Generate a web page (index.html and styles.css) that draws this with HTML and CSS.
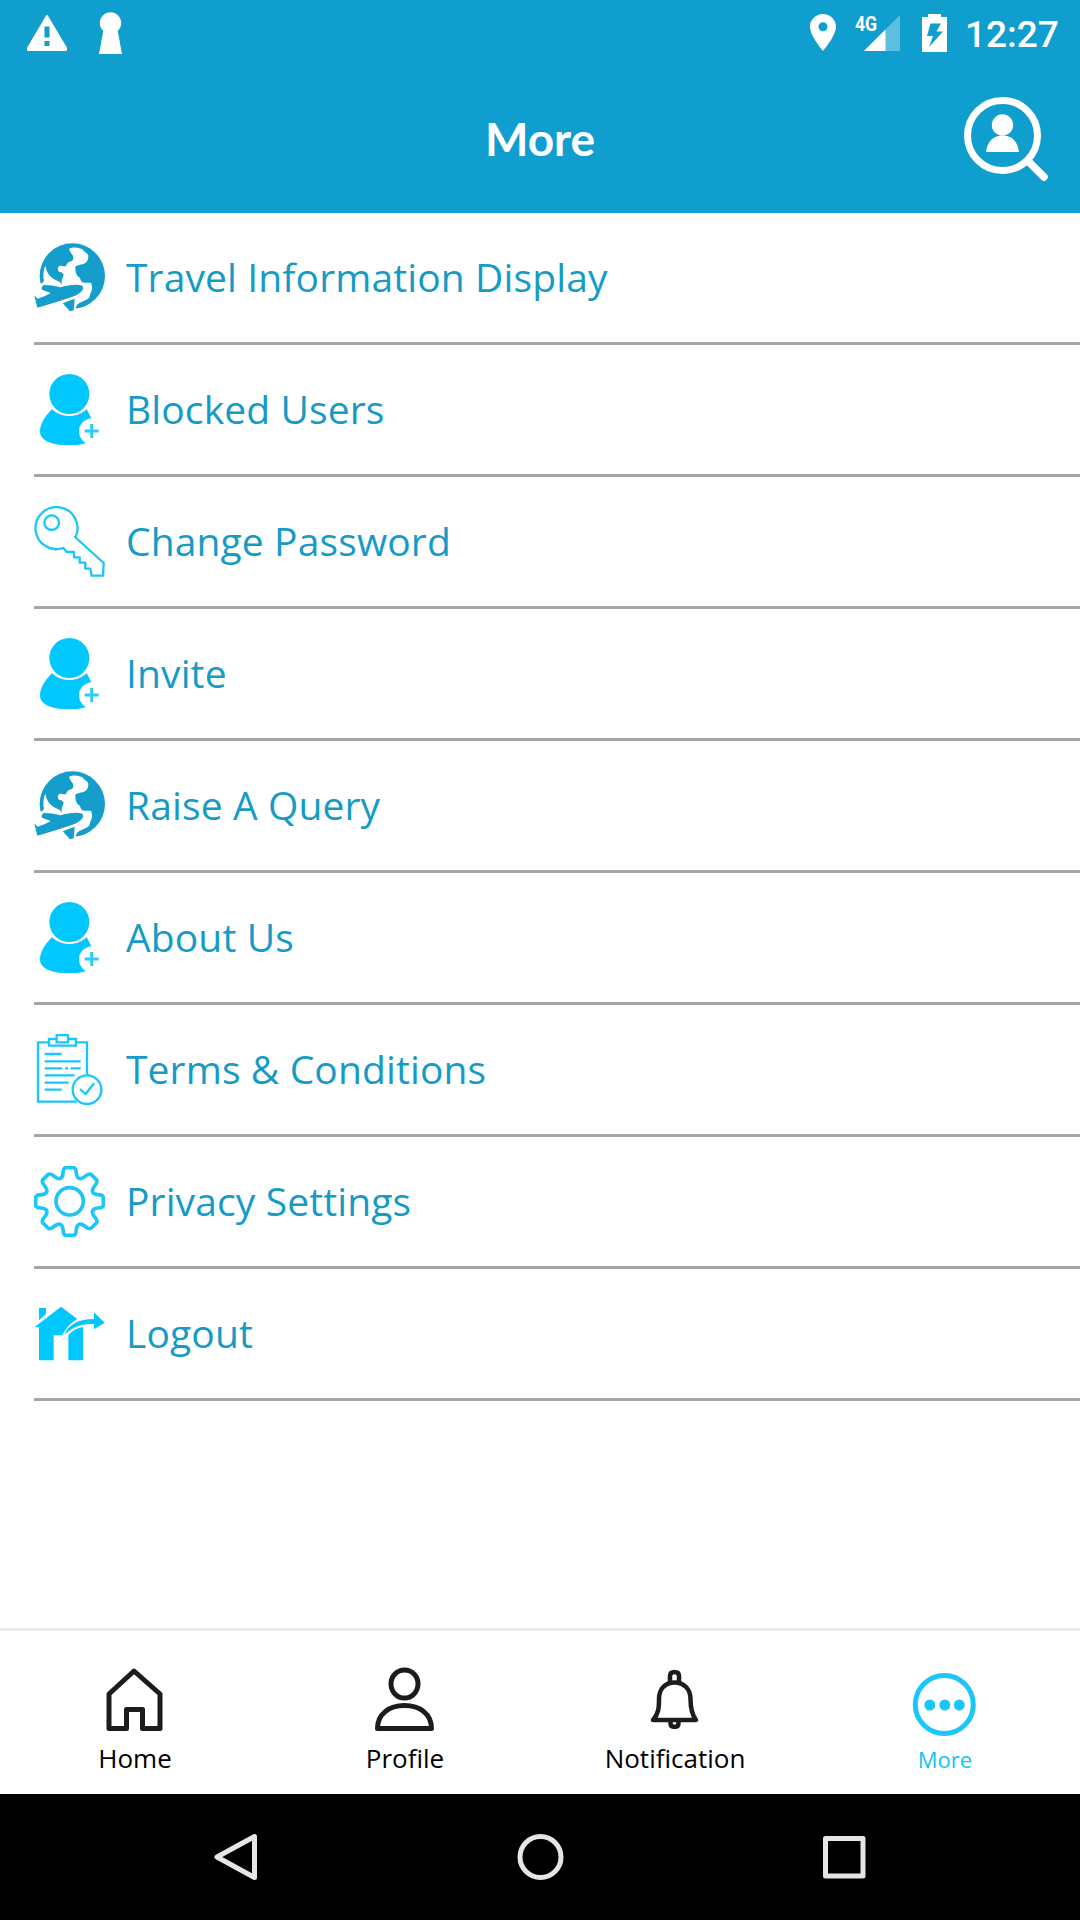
FILE: index.html
```html
<!DOCTYPE html>
<html lang="en">
<head>
	<meta charset="UTF-8">
	<meta name="viewport" content="width=device-width, initial-scale=1.0">
	<title>More</title>
	<link rel="stylesheet" href="styles.css">
</head>
<body>
	<!-- shared icons -->
	<svg class="sprite">
		<symbol id="globe" viewBox="42 66 213 213">
			<circle cx="157" cy="168" r="98" fill="#159dcb"/>
			<path d="M147 86C160 80 180 82 190 90C192 98 204 98 205 108C204 116 204 124 196 129C188 134 178 134 168 138C163 144 168 150 167 157C170 166 174 170 180 174C182 184 188 190 196 188H213C217 196 217 208 214 215C208 222 212 230 204 236C196 242 186 244 178 249C170 254 165 262 168 275L40 275V190L126 192C122 184 128 176 130 168C134 160 124 156 117 155C112 150 112 142 118 138C126 136 132 142 138 138C140 130 146 126 152 124C160 122 162 114 158 106C154 98 148 94 147 86Z" fill="#fff"/>
			<path d="M76 137C80 156 88 172 112 182C122 186 124 190 122 194H62L72 182C68 166 70 150 76 137Z" fill="#fff"/>
			<path d="M43 226L53 236Q74 230 92 219L66 209Q62 200 72 195Q96 195 122 202C142 196 166 192 184 196C196 204 188 216 166 227L110 246L52 263L48 248Z" fill="#159dcb"/>
			<path d="M128 250L164 236L161 271L150 274Z" fill="#159dcb"/>
			<path d="M172 265C184 263 198 258 210 250L206 242C196 250 184 256 172 257Z" fill="#159dcb"/>
		</symbol>
		<symbol id="user" viewBox="42 462 213 213">
			<circle cx="148" cy="522" r="60"/>
			<path d="M96 567C120 594 174 596 200 567L214 594C190 600 177 614 177 633C177 650 186 662 198 670C180 675 166 676 146 676C110 676 60 668 60 634C60 608 80 584 96 567Z"/>
			<path d="M215 612V654M194 633H236" fill="none" stroke="#2ccbf8" stroke-width="9"/>
		</symbol>
	</svg>

	<header>
		<div class="status">
			<svg class="warning" viewBox="0 0 40 36"><path d="M20 1L39 33V35H1V33Z" fill="#fff" stroke="#fff" stroke-width="2" stroke-linejoin="round"/><path d="M17.500 11.500h5v11h-5zM17.500 26h5v5h-5z" fill="#0f9ecd"/></svg>
			<svg class="keyhole" viewBox="0 0 23 42"><circle cx="11.500" cy="11" r="10.700" fill="#fff"/><path d="M5 15H18L23 42H0Z" fill="#fff"/></svg>
			<svg class="location" viewBox="0 0 26 37"><path fill-rule="evenodd" d="M13 0C5.800 0 0 5.700 0 12.800C0 22 13 37 13 37S26 22 26 12.800C26 5.700 20.200 0 13 0ZM13 8.300a4.500 4.500 0 1 1 0 9a4.500 4.500 0 1 1 0-9Z" fill="#fff"/></svg>
			<div class="signal">
				<svg viewBox="0 0 36 36"><path d="M36 0V36H0Z" fill="#fff" opacity=".33"/><path d="M21.500 14.500V36H0Z" fill="#fff"/></svg>
				<span>4G</span>
			</div>
			<svg class="battery" viewBox="0 0 25 38"><path d="M6 0H19V3H25V38H0V3H6Z" fill="#fff"/><path d="M8.500 9.500H19L14.500 17.500H21L7 33L11 22H5Z" fill="#0f9ecd"/></svg>
			<span class="clock">12:27</span>
		</div>
		<div class="title-bar">
			<h1>More</h1>
			<svg class="search" viewBox="0 0 84 84"><circle cx="38.500" cy="38.500" r="35" fill="none" stroke="#fff" stroke-width="7"/><path d="M64 64L80 80" stroke="#fff" stroke-width="7.500" stroke-linecap="round"/><circle cx="38.500" cy="28" r="10.700" fill="#fff"/><path d="M22 55C23 45 29 38.500 38.500 38.500S54 45 55 55Z" fill="#fff"/></svg>
		</div>
	</header>

	<ul class="menu">
		<li><svg><use href="#globe"/></svg><span>Travel Information Display</span></li>
		<li><svg><use href="#user"/></svg><span>Blocked Users</span></li>
		<li>
			<svg class="line" viewBox="42 78 213 213"><circle cx="95" cy="128" r="22"/><path d="M165 171L168 168A63 63 0 1 0 130 204L140 216H162V232H179V248H196V266H211L215 287H249L251 249Z" stroke-linejoin="round"/></svg>
			<span>Change Password</span>
		</li>
		<li><svg><use href="#user"/></svg><span>Invite</span></li>
		<li><svg><use href="#globe"/></svg><span>Raise A Query</span></li>
		<li><svg><use href="#user"/></svg><span>About Us</span></li>
		<li>
			<svg class="line" viewBox="42 72 213 213"><path d="M86 97H54V275H170M170 97H201V195M87 87H110V75H144V87H168V107H87ZM110 87V97H144V87M74 132H125M74 154H182M74 175H127M135 175H144M152 175H182M74 196H164M74 218H146M74 239H125M180 237L197 252L222 220"/><circle cx="201" cy="239" r="43"/></svg>
			<span>Terms &amp; Conditions</span>
		</li>
		<li>
			<svg class="line gear" viewBox="42 468 213 213"><circle cx="149" cy="574" r="41"/><path d="M129 489Q130 473 138 473H160Q168 473 169 489Q170 502 177 505Q184 508 194 500Q208 488 214 494L229 509Q235 515 223 529Q215 539 218 546Q221 553 234 554Q250 555 250 563V585Q250 593 234 594Q221 595 218 602Q215 609 223 619Q235 633 229 639L214 654Q208 660 194 648Q184 640 177 643Q170 646 169 659Q168 676 160 676H138Q130 676 129 659Q128 646 121 643Q114 640 104 648Q90 660 84 654L69 639Q63 633 75 619Q83 609 80 602Q77 595 64 594Q47 593 47 585V563Q47 555 64 554Q77 553 80 546Q83 539 75 529Q63 515 69 509L84 494Q90 488 104 500Q114 508 121 505Q128 502 129 489Z"/></svg>
			<span>Privacy Settings</span>
		</li>
		<li>
			<svg viewBox="42 84 213 213"><path d="M57 114H78V132L57 151ZM44 171L123 110L172 147C152 158 137 176 127 196H101V271H57V171ZM133 194C146 164 176 147 222 147V127L254 158L222 178V162C180 160 156 174 133 194ZM145 195C158 181 172 174 189 171V271H145Z"/></svg>
			<span>Logout</span>
		</li>
	</ul>

	<nav class="tabs">
		<a>
			<svg viewBox="0 0 66 66"><path d="M7 27L32 4L58 27V61.500H40.500V42.500H24.500V61.500H7Z"/></svg>
			<span>Home</span>
		</a>
		<a>
			<svg viewBox="0 0 66 66"><ellipse cx="32.500" cy="17" rx="13.500" ry="14"/><path d="M5.500 61.500C5.500 47 17 38.500 32.500 38.500S59.500 47 59.500 61.500Z"/></svg>
			<span>Profile</span>
		</a>
		<a>
			<svg class="bell" viewBox="0 0 66 66"><path d="M28 16V9Q28 5 32.500 5T37 9V16M11 53C16.500 47 17 41 17 32C17 22 23 15.500 32.500 15.500S48.500 22 48.500 32C48.500 41 49.500 47 54 53ZM28.500 53V56Q28.500 60 32.500 60T36.500 56V53"/></svg>
			<span>Notification</span>
		</a>
		<a class="active">
			<svg viewBox="0 0 66 66"><circle cx="32.300" cy="34.500" r="29"/><g class="dots"><circle cx="17.800" cy="35" r="5.500"/><circle cx="32.800" cy="35" r="5.500"/><circle cx="47.300" cy="35" r="5.500"/></g></svg>
			<span>More</span>
		</a>
	</nav>

	<footer>
		<svg viewBox="0 0 50 50"><path d="M43.500 4.500V45.500L6 25Z"/></svg>
		<svg viewBox="0 0 50 50"><circle cx="25.500" cy="25" r="20.500"/></svg>
		<svg viewBox="0 0 50 50"><rect x="6.500" y="6.500" width="37.500" height="37.500"/></svg>
	</footer>
</body>
</html>
```
FILE: styles.css
```css
*{
	margin: 0;
	padding: 0;
	box-sizing: border-box;
}
body{
	width: 1080px;
	height: 1920px;
	display: flex;
	flex-direction: column;
	background: #fff;
	font-family: "Open Sans", sans-serif;
	overflow: hidden;
}
svg{
	display: block;
	flex: none;
}
.sprite{
	display: none;
}
header{
	height: 213px;
	background: #0f9ecd;
	color: #fff;
}
.status{
	height: 72px;
	display: flex;
	align-items: flex-start;
	padding: 0 20px 0 27px;
}
.warning{
	width: 40px;
	height: 36px;
	margin-top: 15px;
}
.keyhole{
	width: 23px;
	height: 42px;
	margin: 12px auto 0 32px;
}
.location{
	width: 26px;
	height: 37px;
	margin-top: 14px;
}
.signal{
	position: relative;
	margin: 15px 22px 0 28px;
}
.signal svg{
	width: 36px;
	height: 36px;
}
.signal span{
	position: absolute;
	left: -9px;
	top: -3px;
	font: 700 21px/24px Roboto, sans-serif;
	transform: scaleX(.84);
	transform-origin: left;
}
.battery{
	width: 25px;
	height: 38px;
	margin-top: 14px;
}
.clock{
	width: 95px;
	margin-left: 18px;
	font: 500 37px/44px Roboto, sans-serif;
	margin-top: 13px;
	white-space: nowrap;
}
.title-bar{
	height: 141px;
	display: grid;
	grid-template-columns: 1fr auto 1fr;
	padding-right: 32px;
	padding-left: 32px;
}
.title-bar h1{
	grid-column: 2;
	font: 700 46px/56px Lato, sans-serif;
	margin-top: 39px;
}
.search{
	width: 84px;
	height: 84px;
	margin-top: 25px;
	justify-self: end;
}
.menu{
	list-style: none;
	margin-left: 34px;
	flex: 1;
}
.menu li{
	height: 132px;
	display: flex;
	align-items: center;
	gap: 21px;
	border-bottom: 3px solid #a5a5a5;
	color: #159bc5;
	font-size: 39px;
	letter-spacing: .12px;
}
.menu span{
	padding-bottom: 2px;
}
.menu svg{
	width: 71px;
	height: 71px;
	fill: #00c8ff;
}
.menu .line{
	fill: none;
	stroke: #1cc6f9;
	stroke-width: 7;
}
.menu .gear{
	stroke-width: 11;
}
.tabs{
	height: 166px;
	display: grid;
	grid-template-columns: repeat(4, 1fr);
	border-top: 3px solid #eaeaea;
}
.tabs a{
	display: flex;
	flex-direction: column;
	align-items: center;
	padding-top: 36px;
	color: #000;
	font-size: 26px;
	line-height: 34px;
}
.tabs svg{
	width: 66px;
	height: 66px;
	margin-bottom: 8px;
	fill: none;
	stroke: #1c1c1c;
	stroke-width: 5;
	stroke-linejoin: round;
}
.tabs .bell{
	stroke-width: 4.500;
}
.tabs .active{
	padding-top: 39px;
	color: #12c3f7;
	font-size: 22px;
}
.tabs .active svg{
	margin-bottom: 6px;
	stroke: #1cc6f9;
	stroke-width: 5;
}
.tabs .dots{
	fill: #1cc6f9;
	stroke: none;
}
footer{
	height: 126px;
	display: flex;
	justify-content: center;
	align-items: center;
	gap: 254px;
	background: #000;
}
footer svg{
	width: 50px;
	height: 50px;
	fill: none;
	stroke: #e6e6e6;
	stroke-width: 5;
	stroke-linejoin: round;
}
```
